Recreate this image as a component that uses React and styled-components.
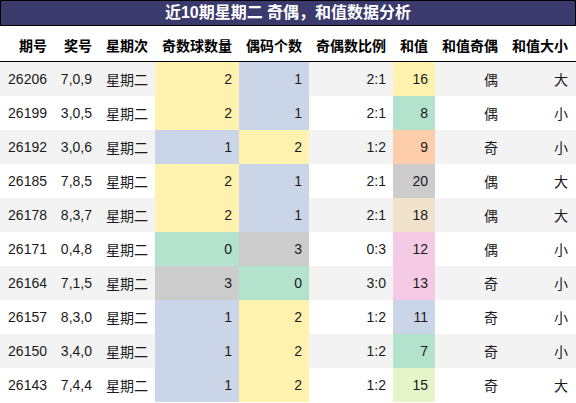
import React from "react";
import styled, { createGlobalStyle } from "styled-components";

const GlobalStyle = createGlobalStyle`
  body {
    margin: 0;
    background: #ffffff;
    font-family: "Liberation Sans", "Noto Sans CJK SC", sans-serif;
  }
`;

const COLS = "54px 45px 56px 84px 70px 84px 42px 70px 70px";

const rows = [
  ["26206", "7,0,9", 2, 1, "2:1", 16, "#fff2ae", "偶", "大"],
  ["26199", "3,0,5", 2, 1, "2:1", 8, "#b3e2cd", "偶", "小"],
  ["26192", "3,0,6", 1, 2, "1:2", 9, "#fdcdac", "奇", "小"],
  ["26185", "7,8,5", 2, 1, "2:1", 20, "#cccccc", "偶", "大"],
  ["26178", "8,3,7", 2, 1, "2:1", 18, "#f1e2cc", "偶", "大"],
  ["26171", "0,4,8", 0, 3, "0:3", 12, "#f4cae4", "偶", "小"],
  ["26164", "7,1,5", 3, 0, "3:0", 13, "#f4cae4", "奇", "小"],
  ["26157", "8,3,0", 1, 2, "1:2", 11, "#cbd5e8", "奇", "小"],
  ["26150", "3,4,0", 1, 2, "1:2", 7, "#b3e2cd", "奇", "小"],
  ["26143", "7,4,4", 1, 2, "1:2", 15, "#e6f5c9", "奇", "大"],
];

const countColor = {
  0: "#b3e2cd",
  1: "#cbd5e8",
  2: "#fff2ae",
  3: "#cccccc",
};

const headers = ["期号", "奖号", "星期次", "奇数球数量", "偶码个数", "奇偶数比例", "和值", "和值奇偶", "和值大小"];

const Wrapper = styled.div`
  width: 576px;
  color: #1a1a1a;
`;

const Title = styled.div`
  width: 576px;
  height: 26px;
  box-sizing: border-box;
  border: 1px solid #000;
  background: #3b3a6c;
  color: #ffffff;
  font-family: "Liberation Sans", "Noto Sans CJK SC", sans-serif;
  font-weight: 700;
  font-size: 16px;
  line-height: 23px;
  text-align: center;
`;

const Row = styled.div`
  display: grid;
  grid-template-columns: ${COLS};
  height: ${({ $head }) => ($head ? "35px" : "34px")};
  background: ${({ $alt }) => ($alt ? "#f3f3f3" : "#ffffff")};
  border-bottom: ${({ $head }) => ($head ? "1px solid #000" : "none")};
`;

const Cell = styled.div`
  display: flex;
  align-items: center;
  justify-content: flex-end;
  padding-right: 7px;
  font-size: 14px;
  white-space: nowrap;
  background: ${({ $bg }) => $bg || "transparent"};
`;

const HeadCell = styled(Cell)`
  font-weight: 700;
  color: #000;
  padding-top: 3px;
`;

export default function App() {
  return (
    <Wrapper>
      <GlobalStyle />
      <Title>近10期星期二 奇偶，和值数据分析</Title>
      <Row $head>
        {headers.map((h) => (
          <HeadCell key={h}>{h}</HeadCell>
        ))}
      </Row>
      {rows.map((r, i) => (
        <Row key={r[0]} $alt={i % 2 === 0}>
          <Cell>{r[0]}</Cell>
          <Cell>{r[1]}</Cell>
          <Cell>星期二</Cell>
          <Cell $bg={countColor[r[2]]}>{r[2]}</Cell>
          <Cell $bg={countColor[r[3]]}>{r[3]}</Cell>
          <Cell>{r[4]}</Cell>
          <Cell $bg={r[6]}>{r[5]}</Cell>
          <Cell>{r[7]}</Cell>
          <Cell>{r[8]}</Cell>
        </Row>
      ))}
    </Wrapper>
  );
}
